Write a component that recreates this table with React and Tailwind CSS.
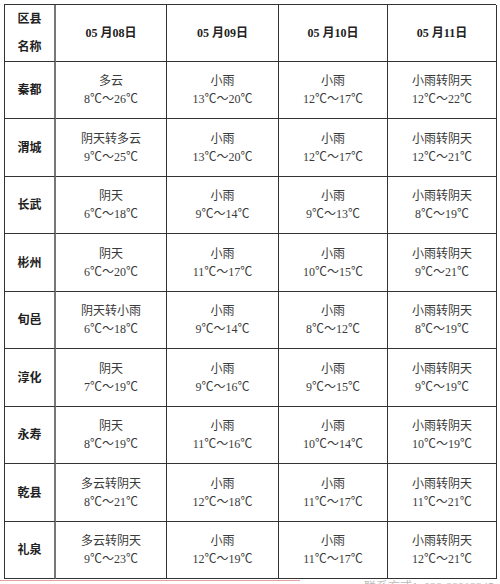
import React from "react";

const font = { fontFamily: '"Liberation Serif", "Noto Sans CJK SC", serif' };

const days = ["05 月08日", "05 月09日", "05 月10日", "05 月11日"];

const rows = [
  { name: "秦都", h: "h-[57px]", cells: [["多云", "8℃～26℃"], ["小雨", "13℃～20℃"], ["小雨", "12℃～17℃"], ["小雨转阴天", "12℃～22℃"]] },
  { name: "渭城", h: "h-[58px]", cells: [["阴天转多云", "9℃～25℃"], ["小雨", "13℃～20℃"], ["小雨", "12℃～17℃"], ["小雨转阴天", "12℃～21℃"]] },
  { name: "长武", h: "h-[57px]", cells: [["阴天", "6℃～18℃"], ["小雨", "9℃～14℃"], ["小雨", "9℃～13℃"], ["小雨转阴天", "8℃～19℃"]] },
  { name: "彬州", h: "h-[58px]", cells: [["阴天", "6℃～20℃"], ["小雨", "11℃～17℃"], ["小雨", "10℃～15℃"], ["小雨转阴天", "9℃～21℃"]] },
  { name: "旬邑", h: "h-[57px]", cells: [["阴天转小雨", "6℃～18℃"], ["小雨", "9℃～14℃"], ["小雨", "8℃～12℃"], ["小雨转阴天", "8℃～19℃"]] },
  { name: "淳化", h: "h-[58px]", cells: [["阴天", "7℃～19℃"], ["小雨", "9℃～16℃"], ["小雨", "9℃～15℃"], ["小雨转阴天", "9℃～19℃"]] },
  { name: "永寿", h: "h-[57px]", cells: [["阴天", "8℃～19℃"], ["小雨", "11℃～16℃"], ["小雨", "10℃～14℃"], ["小雨转阴天", "10℃～19℃"]] },
  { name: "乾县", h: "h-[58px]", cells: [["多云转阴天", "8℃～21℃"], ["小雨", "12℃～18℃"], ["小雨", "11℃～17℃"], ["小雨转阴天", "11℃～21℃"]] },
  { name: "礼泉", h: "h-[57px]", cells: [["多云转阴天", "9℃～23℃"], ["小雨", "12℃～19℃"], ["小雨", "11℃～17℃"], ["小雨转阴天", "12℃～21℃"]] },
];

export default function App() {
  return (
    <div className="w-[500px] h-[584px] overflow-hidden bg-white" style={font}>
      <div className="pt-[4px] pl-[4px]">
        <div className="w-[492px] grid grid-cols-[51px_111px_112px_109px_109px] border-l border-t border-[#333]">
          {/* header */}
          <div className="h-[57px] border-r-2 border-b border-r-[#777] border-b-[#333] flex flex-col items-center justify-center text-[12px] leading-[28px] font-bold text-[#222]">
            <span>区县</span>
            <span>名称</span>
          </div>
          {days.map((d) => (
            <div key={d} className="h-[57px] border-r border-b border-[#333] flex items-center justify-center text-[12px] font-bold text-[#222]">
              {d}
            </div>
          ))}

          {rows.map((r) => (
            <React.Fragment key={r.name}>
              <div className={`${r.h} border-r-2 border-b border-r-[#777] border-b-[#333] flex items-center justify-center text-[12px] font-bold text-[#222]`}>
                {r.name}
              </div>
              {r.cells.map((c, i) => (
                <div key={i} className={`${r.h} border-r border-b border-[#333] flex flex-col items-center justify-center text-[12px] leading-[18px] text-[#3a3a3a]`}>
                  <span>{c[0]}</span>
                  <span>{c[1]}</span>
                </div>
              ))}
            </React.Fragment>
          ))}
        </div>
      </div>
      <div className="flex items-start">
        <div className="mt-[1px] w-[300px] h-[1px] bg-[#e8a0a0]" />
        <div className="ml-[64px] mt-[1px] text-[12px] leading-[14px] text-[#bbb] whitespace-nowrap">联系方式：028-88912345</div>
      </div>
    </div>
  );
}
